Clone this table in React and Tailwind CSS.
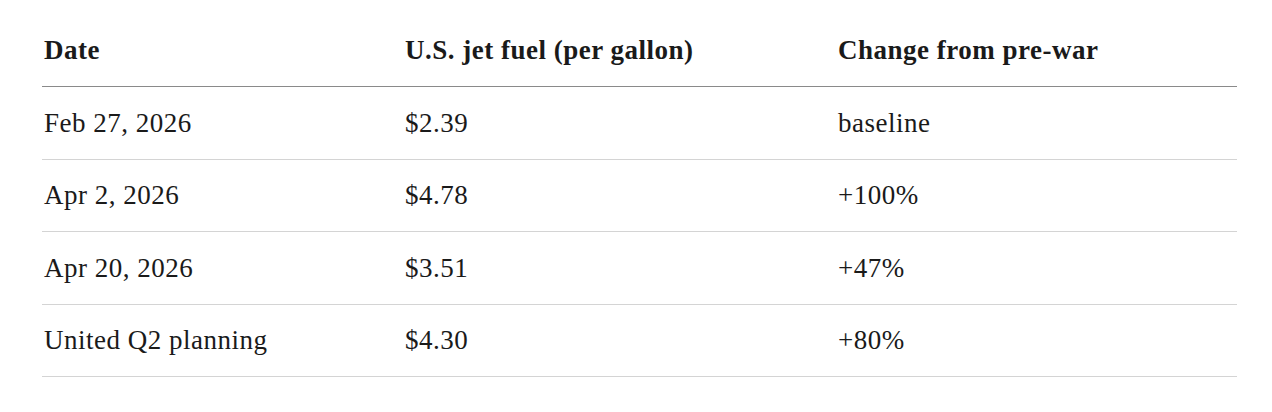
const rows = [
  { date: 'Feb 27, 2026', price: '$2.39', change: 'baseline' },
  { date: 'Apr 2, 2026', price: '$4.78', change: '+100%' },
  { date: 'Apr 20, 2026', price: '$3.51', change: '+47%' },
  { date: 'United Q2 planning', price: '$4.30', change: '+80%' },
];

export default function App() {
  return (
    <div className="min-h-screen bg-white pt-[15px]" style={{ fontFamily: '"Liberation Serif", serif' }}>
      <div className="ml-[42px] w-[1195px] text-[#1a1a1a] tracking-[0.5px]">
        <div className="grid grid-cols-[361px_433px_1fr] h-[72px] items-center border-b border-[#8a8a8a] text-[27px] font-bold">
          <div className="pl-[2px]">Date</div>
          <div className="pl-[2px]">U.S. jet fuel (per gallon)</div>
          <div className="pl-[2px]">Change from pre-war</div>
        </div>
        {rows.map((row) => (
          <div
            key={row.date}
            className="grid grid-cols-[361px_433px_1fr] h-[72.5px] items-center border-b border-[#d4d4d4] text-[27px]"
          >
            <div className="pl-[2px]">{row.date}</div>
            <div className="pl-[2px]">{row.price}</div>
            <div className="pl-[2px]">{row.change}</div>
          </div>
        ))}
      </div>
    </div>
  );
}
